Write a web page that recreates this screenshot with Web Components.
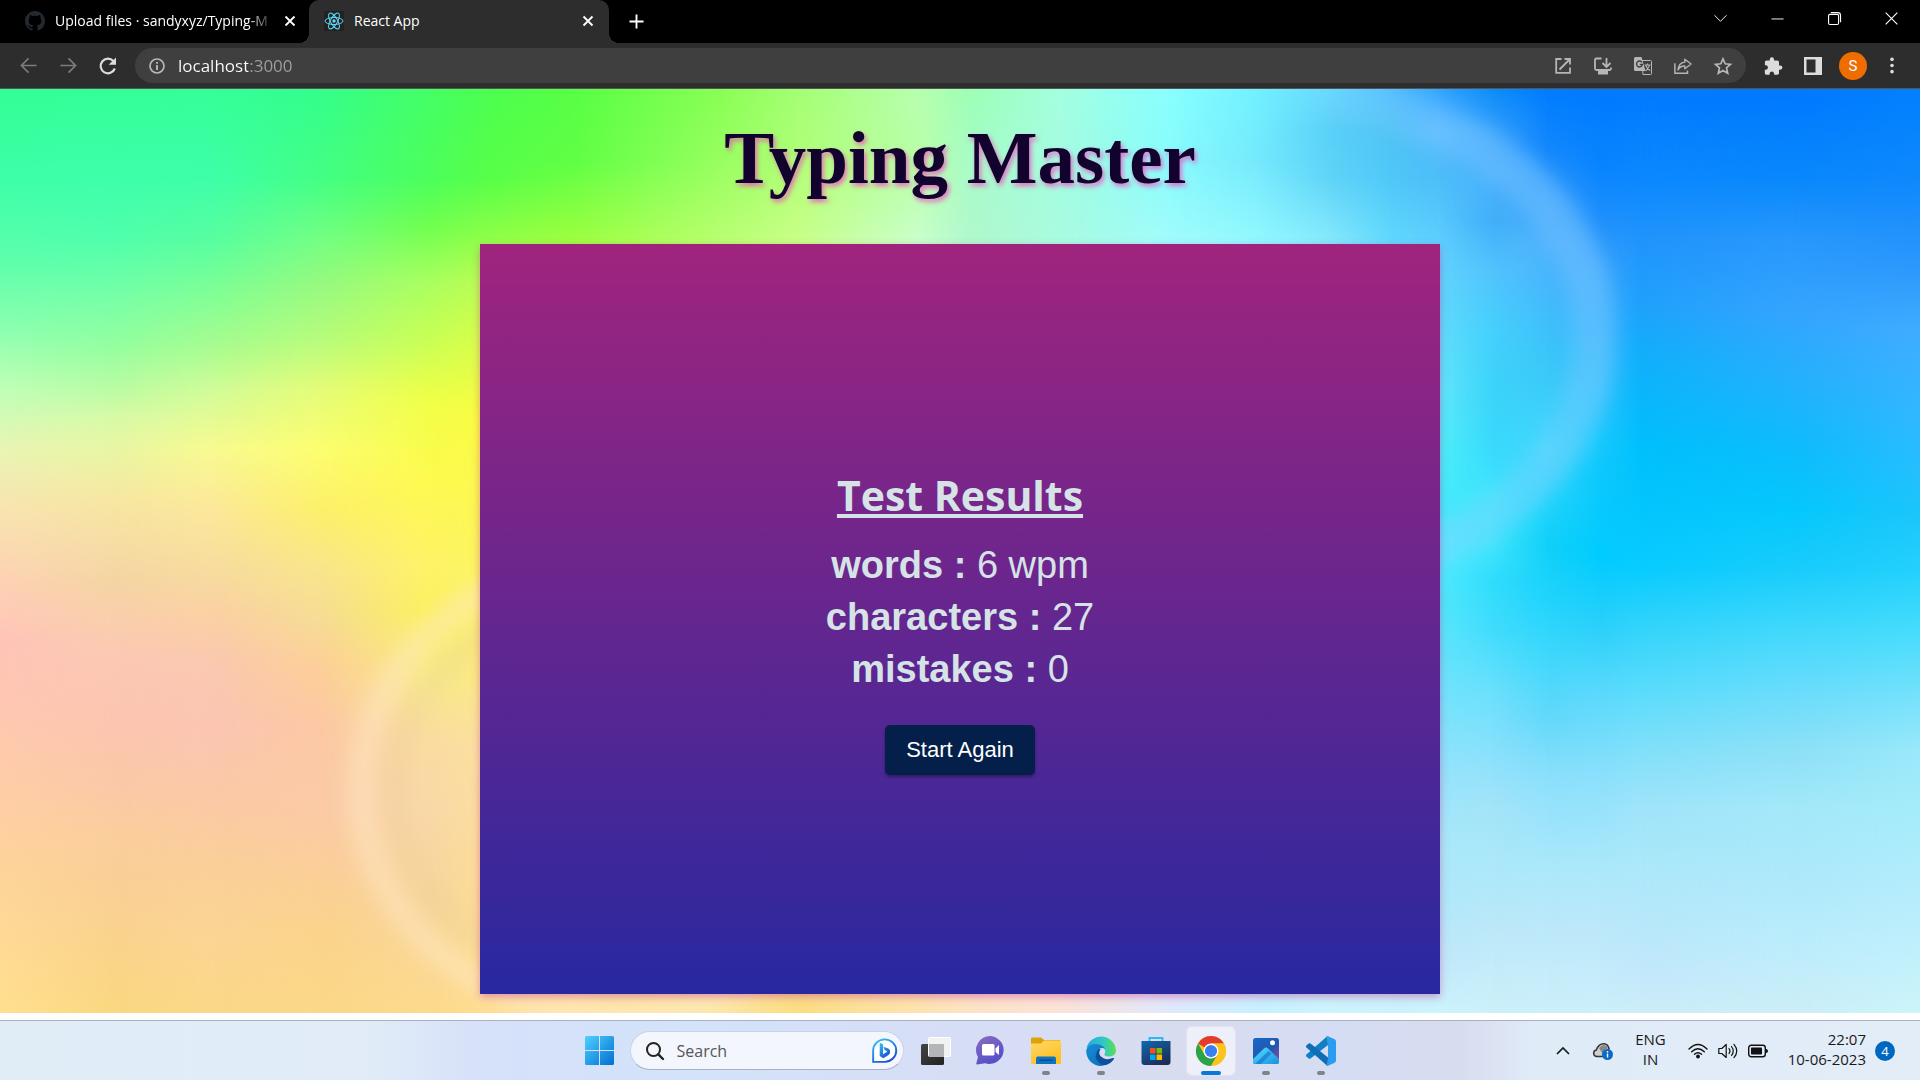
<!DOCTYPE html>
<html lang="en">
<head>
<meta charset="utf-8">
<title>React App</title>
<style>
html, body { margin: 0; height: 100%; }
body { font-family: "Open Sans", "Noto Sans", sans-serif; background: #fff; overflow: hidden; }
</style>
</head>
<body>
<desktop-shell>
  <tab-strip slot="top"></tab-strip>
  <address-bar slot="top"></address-bar>
  <typing-app>
    <span slot="title">Typing Master</span>
    <results-card>
      <span slot="heading">Test Results</span>
      <result-row label="words">6 wpm</result-row>
      <result-row label="characters">27</result-row>
      <result-row label="mistakes">0</result-row>
      <span slot="action">Start Again</span>
    </results-card>
  </typing-app>
  <task-bar slot="bottom"></task-bar>
</desktop-shell>

<script>
const ICONS = {
  github: ['0 0 16 16', '<path fill="#24292f" d="M8 0C3.58 0 0 3.58 0 8c0 3.54 2.29 6.53 5.47 7.59.4.07.55-.17.55-.38 0-.19-.01-.82-.01-1.49-2.01.37-2.53-.49-2.69-.94-.09-.23-.48-.94-.82-1.13-.28-.15-.68-.52-.01-.53.63-.01 1.08.58 1.23.82.72 1.21 1.87.87 2.33.66.07-.52.28-.87.51-1.07-1.78-.2-3.64-.89-3.64-3.95 0-.87.31-1.59.82-2.15-.08-.2-.36-1.02.08-2.12 0 0 .67-.21 2.2.82.64-.18 1.32-.27 2-.27s1.36.09 2 .27c1.53-1.04 2.2-.82 2.2-.82.44 1.1.16 1.92.08 2.12.51.56.82 1.27.82 2.15 0 3.07-1.87 3.75-3.65 3.95.29.25.54.73.54 1.48 0 1.07-.01 1.93-.01 2.2 0 .21.15.46.55.38A8.01 8.01 0 0 0 16 8c0-4.42-3.58-8-8-8z"/>'],
  react: ['0 0 20 20', '<rect width="20" height="20" rx="1" fill="#222"/><g fill="none" stroke="#61dafb"><ellipse cx="10" cy="10" rx="9" ry="3.5"/><ellipse cx="10" cy="10" rx="9" ry="3.5" transform="rotate(60 10 10)"/><ellipse cx="10" cy="10" rx="9" ry="3.5" transform="rotate(120 10 10)"/></g><circle cx="10" cy="10" r="1.7" fill="#61dafb"/>'],
  close: ['0 0 12 12', '<path d="M1.5 1.5l9 9M10.5 1.5l-9 9" stroke="currentColor" stroke-width="1.800"/>'],
  plus: ['0 0 16 16', '<path d="M8 0.5v15M.5 8h15" stroke="currentColor" stroke-width="2"/>'],
  down: ['0 0 14 14', '<path d="M.5 3.5L7 10l6.500-6.500" fill="none" stroke="currentColor" stroke-width="1"/>'],
  minimize: ['0 0 14 14', '<path d="M.5 7.500h13" stroke="currentColor"/>'],
  restore: ['0 0 14 14', '<rect x=".6" y="2.600" width="10.800" height="10.800" rx="1.500" fill="none" stroke="currentColor" stroke-width="1.200"/><path d="M3 .7h7.500a3 3 0 0 1 3 3V11" fill="none" stroke="currentColor" stroke-width="1.200"/>'],
  winclose: ['0 0 14 14', '<path d="M.7.7l12.600 12.600M13.300.7L.7 13.300" stroke="currentColor" stroke-width="1.200"/>'],
  back: ['0 0 18 18', '<path d="M17.500 9H2M9 1.500L1.500 9 9 16.500" fill="none" stroke="currentColor" stroke-width="1.700"/>'],
  forward: ['0 0 18 18', '<path d="M.5 9H16M9 1.500L16.500 9 9 16.500" fill="none" stroke="currentColor" stroke-width="1.700"/>'],
  reload: ['0 0 18 18', '<path d="M15.800 11.500A7.300 7.300 0 1 1 14.300 4" fill="none" stroke="currentColor" stroke-width="2.200"/><path d="M17 .5v7.300H9.700z" fill="currentColor"/>'],
  info: ['0 0 16 16', '<circle cx="8" cy="8" r="7" fill="none" stroke="currentColor" stroke-width="1.700"/><path d="M8 7v5M8 4v1.800" stroke="currentColor" stroke-width="1.900"/>'],
  open: ['0 0 16 16', '<path d="M6.500 1H1.200v13.800H15V9.500M9.500 1H15v5.500M15 1L4.500 11.500" fill="none" stroke="currentColor" stroke-width="1.800"/>'],
  install: ['0 0 18 18', '<path d="M7.500 1.500H2.400Q1 1.500 1 3v8.500q0 1.500 1.400 1.500h13.200q1.400 0 1.400-1.500V10.500M12.500 1v8.500M8.500 6l4 4 4-4" fill="none" stroke="currentColor" stroke-width="1.800"/><path d="M4 14h10v3.500H4z" fill="currentColor"/>'],
  translate: ['0 0 18 18', '<path d="M8 3.500h8.500q1 0 1 1v12q0 1-1 1H9z" fill="none" stroke="currentColor" stroke-width="1"/><path d="M10.500 8h6M13.500 6.500V8M15.500 8q-.8 3.500-4 6M11.800 8.500q1 3 4.400 5" fill="none" stroke="currentColor" stroke-width="1.100"/><path d="M1.500 0h6l4 14H1.500Q0 14 0 12.500v-11Q0 0 1.500 0z" fill="currentColor"/><path d="M8 5.300a3 3 0 1 0 .5 2.200H5.800" fill="none" stroke="#3f3f3f" stroke-width="1.400"/>'],
  share: ['0 0 20 18', '<path d="M1 6v11h14v-3" fill="none" stroke="currentColor" stroke-width="1.600"/><path d="M12 1.500l7 5.300-7 5.300V9Q7 8.500 4.500 13.500 5 5.500 12 4.700z" fill="none" stroke="currentColor" stroke-width="1.500" stroke-linejoin="round"/>'],
  star: ['0 0 18 18', '<path d="M9 1.800l2.200 5 5.300.5-4 3.600 1.200 5.300L9 13.400l-4.700 2.800 1.200-5.300-4-3.600 5.300-.5z" fill="none" stroke="currentColor" stroke-width="1.700"/>'],
  puzzle: ['0 0 18 18', '<path fill="currentColor" d="M16.300 8.500h-1.300V5.200c0-.9-.7-1.700-1.700-1.700H10V2.300a2.100 2.100 0 0 0-4.200 0v1.200H2.500C1.600 3.500.9 4.300.9 5.200v3.100h1.200a2.300 2.300 0 0 1 0 4.500H.8V16c0 .9.800 1.700 1.700 1.700h3.100v-1.300a2.300 2.300 0 0 1 4.500 0v1.300h3.200c1 0 1.700-.8 1.700-1.700v-3.300h1.300a2.100 2.100 0 0 0 0-4.200z"/>'],
  panel: ['0 0 18 18', '<path fill="currentColor" fill-rule="evenodd" d="M0 0h18v18H0zM2.500 2.500v13H11.500v-13z"/>'],
  dots: ['0 0 4 18', '<g fill="currentColor"><circle cx="2" cy="2.500" r="1.900"/><circle cx="2" cy="9" r="1.900"/><circle cx="2" cy="15.500" r="1.900"/></g>'],
  windows: ['0 0 29 29', '<defs><linearGradient id="w" x2="1" y2="1"><stop stop-color="#50d0ff"/><stop offset="1" stop-color="#006fd0"/></linearGradient></defs><path fill="url(#w)" d="M1.500 0H14v14H0V1.500Q0 0 1.500 0zM15 0h12.500Q29 0 29 1.500V14H15zM0 15h14v14H1.500Q0 29 0 27.500zM15 15h14v12.500q0 1.500-1.500 1.500H15z"/>'],
  search: ['0 0 18 18', '<circle cx="7.500" cy="7.500" r="6.500" fill="none" stroke="#222" stroke-width="2"/><path d="M12.300 12.300l4.700 4.700" stroke="#222" stroke-width="2.400" stroke-linecap="round"/>'],
  bing: ['0 0 26 26', '<defs><linearGradient id="b" x2=".6" y2="1"><stop stop-color="#30c8f8"/><stop offset="1" stop-color="#1c50d0"/></linearGradient></defs><path d="M1.200 24.800V13a12 11.700 0 1 1 12 11.800z" fill="#fff" stroke="url(#b)" stroke-width="2"/><path d="M8 5l3.500 1.500v10.300l4.500-2.800-2.800-1.500-1.300-3.500 5 1.800q2 1 2 3.500t-2.500 4l-4.700 2.700L8 18.800z" fill="url(#b)"/>'],
  taskview: ['0 0 30 28', '<defs><linearGradient id="t" y2="1"><stop stop-color="#444"/><stop offset="1" stop-color="#222"/></linearGradient></defs><rect y="7" width="23" height="21" rx="1.500" fill="url(#t)"/><rect x="7.500" y=".5" width="22" height="19" rx="1" fill="#f2f2f2" stroke="#fff"/><path d="M8 7h14q1 0 1 1v12H8z" fill="#b4b5b8"/>'],
  chat: ['0 0 29 29', '<defs><linearGradient id="c" x2=".5" y2="1"><stop stop-color="#8a6cc0"/><stop offset="1" stop-color="#5450c8"/></linearGradient></defs><path fill="url(#c)" d="M14.500 0A14.300 14 0 1 1 9 27.300L1.200 28.500Q0 28.500.3 27.300L2 21A14.300 14 0 0 1 14.500 0z"/><rect x="6" y="8" width="12.500" height="11.500" rx="1.500" fill="#fff"/><path d="M19.500 12.500L23 9v10l-3.500-3z" fill="#fff"/>'],
  folder: ['0 0 30 27', '<defs><linearGradient id="f" x2=".5" y2="1"><stop stop-color="#ffd968"/><stop offset="1" stop-color="#ffc022"/></linearGradient></defs><path fill="#e0a008" d="M1 0h9l3 2.500H29V9H0V1Q0 0 1 0z"/><path fill="url(#f)" d="M0 6h10l3-3h16q1 0 1 1v21.500q0 1-1 1H1q-1 0-1-1z"/><path fill="#0f74c0" d="M5 26.500V21q0-2 2-2h16q2 0 2 2v5.500z"/><path d="M9 22.800h12" stroke="#0a4f92" stroke-width="1.500" stroke-linecap="round"/>'],
  edge: ['0 0 30 30', '<defs><linearGradient id="e1" x2="1"><stop stop-color="#28a8e0"/><stop offset=".6" stop-color="#34c8c0"/><stop offset="1" stop-color="#5ce050"/></linearGradient><linearGradient id="e2" y2="1"><stop stop-color="#1490d8"/><stop offset="1" stop-color="#0c68b8"/></linearGradient></defs><path fill="url(#e1)" d="M.5 12A15 15 0 0 1 30 14q0 6.500-7 6.500-5 0-4.500-2.500 2-3-1-6Q10 6 .5 12z"/><path fill="url(#e2)" d="M.2 14Q2 8 9 8q7 0 10 4.500-5-1.500-7 2-2 6 3 10 4 3 8 2.500-4 3-8 3A15 15 0 0 1 .2 14z"/><path fill="#0d4f9c" d="M12.500 13Q7 20 12 25.500q3 4 8 3.500 5-1.500 8-6 .5-1.500-1-1-8 3-12.500-2Q12 17 14.500 13z"/>'],
  store: ['0 0 30 30', '<defs><linearGradient id="s" x2=".6" y2="1"><stop stop-color="#1068b0"/><stop offset="1" stop-color="#1c2f58"/></linearGradient></defs><path d="M8.500 6V2h13v4" fill="none" stroke="#2cb8f0" stroke-width="1.800"/><path fill="url(#s)" d="M.5 5h29v21q0 3-3 3h-23q-3 0-3-3z"/><path fill="#f25022" d="M9 12h5.500v5.500H9z"/><path fill="#7fba00" d="M15.500 12H21v5.500h-5.500z"/><path fill="#00a4ef" d="M9 18.500h5.500V24H9z"/><path fill="#ffb900" d="M15.500 18.500H21V24h-5.500z"/>'],
  chrome: ['0 0 48 48', '<circle cx="24" cy="24" r="24" fill="#fcc31e"/><path fill="#e33b2e" d="M24 24L3.200 12A24 24 0 0 1 44.800 12H24z"/><path fill="#2ba24c" d="M24 48A24 24 0 0 1 3.200 12L13.600 30 24 36l10.400-6z"/><path fill="#fcc31e" d="M24 48l10.400-18L24 12h20.800A24 24 0 0 1 24 48z"/><circle cx="24" cy="24" r="12" fill="#fff"/><circle cx="24" cy="24" r="9.800" fill="#3a7ff0"/>'],
  photos: ['0 0 26 26', '<defs><linearGradient id="p" x2=".7" y2="1"><stop stop-color="#1868c8"/><stop offset=".6" stop-color="#2058b0"/><stop offset="1" stop-color="#8848a8"/></linearGradient><linearGradient id="p2" y2="1"><stop stop-color="#50e0ff"/><stop offset="1" stop-color="#1a90e0"/></linearGradient></defs><rect width="26" height="26" rx="2.500" fill="url(#p)"/><path fill="url(#p2)" d="M0 21L11 10.500q2-1.800 4 0L26 21v2.500Q26 26 23.500 26h-21Q0 26 0 23.500z"/><path d="M2 26L15.500 13l3 2.500L8 26z" fill="#1878d0" opacity=".7"/><circle cx="19.500" cy="4.800" r="2.500" fill="#fff"/>'],
  vscode: ['0 0 30 30', '<path d="M21.500 0L22 9 4.500 22.500q-1 .6-1.800 0L.4 20.400q-.8-.9 0-1.800z" fill="#0f80c8"/><path d="M21.500 30L22 21.500 4.500 7.500q-1-.6-1.800 0L.4 9.600q-.8.900 0 1.800z" fill="#0e6eb8"/><path d="M21.500 0l7.200 3.300Q30 4 30 5.500v19q0 1.500-1.300 2.200L21.500 30q-1 .2-1.500-.5 2 .2 2-2v-25q0-2.200-2-2 .5-.7 1.500-.5z" fill="#2a9df0"/>'],
  up: ['0 0 14 14', '<path d="M1 10l6-6 6 6" fill="none" stroke="#1a1a1a" stroke-width="1.700"/>'],
  cloud: ['0 0 20 18', '<path d="M3.500 14.500A3.300 3.300 0 0 1 3.300 8Q5.500 1.500 11 1.700q4 .3 5 4.800l-1 3q-2 1-3 5z" fill="#cfcfcf" stroke="#333" stroke-width="1.500"/><path d="M6 6q5-6 9 0l-6 5z" fill="#888"/><circle cx="14.500" cy="12.500" r="5.500" fill="#0b6ac4"/><path d="M14.500 11.500v4M14.500 9v1.400" stroke="#fff" stroke-width="1.400"/>'],
  wifi: ['0 0 20 15', '<g fill="none" stroke="#111" stroke-width="1.400" stroke-linecap="round"><path d="M1 5.500q9-9 18 0M3.700 8.200q6.300-6 12.600 0M6.500 10.800q3.500-3.200 7 0"/></g><circle cx="10" cy="13" r="1.900" fill="#111"/>'],
  sound: ['0 0 20 16', '<g fill="none" stroke="#111" stroke-width="1.200" stroke-linecap="round" stroke-linejoin="round"><path d="M.8 5.500h3L8.200 1.500v13L3.800 10.500h-3zM11 5.500q2 2.500 0 5M13.500 3.500q3.500 4.500 0 9M16 1.300q5.500 6.700 0 13.400"/></g>'],
  battery: ['0 0 20 13', '<rect x=".7" y=".7" width="16.600" height="11.600" rx="2.500" fill="none" stroke="#111" stroke-width="1.400"/><rect x="3" y="3" width="11" height="7" rx=".8" fill="#111"/><path d="M18 4.500q2 0 2 2t-2 2z" fill="#111"/>']
};

function define(name, html, setup) {
  const template = document.createElement('template');
  template.innerHTML = html;
  customElements.define(name, class extends HTMLElement {
    constructor() {
      super();
      this.attachShadow({ mode: 'open' }).append(template.content.cloneNode(true));
    }
    connectedCallback() { if (setup) setup(this, this.shadowRoot); }
  });
}

define('ui-icon', `
<style>
:host { display: block; flex: none; width: var(--w, 18px); height: var(--h, var(--w, 18px)); }
svg { display: block; width: 100%; height: 100%; overflow: visible; }
</style>
<svg aria-hidden="true"></svg>`, (el, root) => {
  const [box, shapes] = ICONS[el.getAttribute('name')];
  const svg = root.querySelector('svg');
  svg.setAttribute('viewBox', box);
  svg.innerHTML = shapes;
});

define('desktop-shell', `
<style>
:host { display: flex; flex-direction: column; height: 100vh; }
main { flex: 1; min-height: 0; display: flex; padding-bottom: 7px; background: #fff; }
</style>
<slot name="top"></slot>
<main><slot></slot></main>
<slot name="bottom"></slot>`);

define('tab-strip', `
<style>
:host { display: flex; height: 43px; background: #000; color: #fff; font-size: 14px; line-height: 20px; }
button { all: unset; display: flex; align-items: center; justify-content: center; flex: none; }
.tab { box-sizing: border-box; width: 300px; display: flex; align-items: center; padding: 0 15px 2px; gap: 10px; position: relative; }
.first { width: 309px; padding: 0 13px 2px 25px; }
.title { flex: 1; min-width: 0; white-space: nowrap; }
.first .title { -webkit-mask: linear-gradient(to right, #000 88%, transparent); mask: linear-gradient(to right, #000 88%, transparent); }
.active { background: #2d2d2d; border-radius: 10px 10px 0 0; }
.active::before, .active::after { content: ""; position: absolute; bottom: 0; width: 10px; height: 10px; }
.active::before { right: 100%; background: radial-gradient(circle at 0 0, transparent 10px, #2d2d2d 10px); }
.active::after { left: 100%; background: radial-gradient(circle at 100% 0, transparent 10px, #2d2d2d 10px); }
.new { width: 54px; --w: 15px; }
.close { --w: 12px; }
.fav { --w: 20px; }
.controls { margin: 0 0 0 auto; display: flex; height: 37px; --w: 13px; }
.controls button { width: 57px; }
</style>
<div class="tab first"><ui-icon class="fav" name="github"></ui-icon><span class="title">Upload files · sandyxyz/Typing-M</span><button class="close" aria-label="Close tab"><ui-icon name="close"></ui-icon></button></div>
<div class="tab active"><ui-icon class="fav" name="react"></ui-icon><span class="title">React App</span><button class="close" aria-label="Close tab"><ui-icon name="close"></ui-icon></button></div>
<button class="new" aria-label="New tab"><ui-icon name="plus"></ui-icon></button>
<div class="controls">
<button aria-label="Search tabs"><ui-icon name="down"></ui-icon></button>
<button aria-label="Minimize"><ui-icon name="minimize"></ui-icon></button>
<button aria-label="Restore"><ui-icon name="restore"></ui-icon></button>
<button aria-label="Close window"><ui-icon name="winclose"></ui-icon></button>
</div>`);

define('address-bar', `
<style>
:host { display: flex; align-items: center; box-sizing: border-box; height: 46px; padding: 0 10px 0 8px; background: #2d2d2d; border-bottom: 1px solid #555; color: #dcdcdc; }
button { all: unset; display: flex; align-items: center; justify-content: center; width: 40px; height: 35px; }
.dim { color: #7d7d7d; --w: 17px; }
.box { flex: 1; min-width: 0; display: flex; align-items: center; height: 35px; margin: 0 7px; padding: 0 3px 0 14px; border-radius: 18px; background: #3f3f3f; color: #b6b6b6; --w: 16px; }
input { all: unset; flex: 1; min-width: 0; margin-left: 13px; font-size: 17px; line-height: 24px; color: #fff; -webkit-text-fill-color: transparent; background: linear-gradient(to right, #fff 70px, #a0a0a0 70px); -webkit-background-clip: text; background-clip: text; }
.box .wide { --w: 18px; }
.avatar { width: 28px; height: 28px; margin: 0 7px 0 6px; border-radius: 50%; background: #ee6c00; color: #fff; font: 15px/28px Roboto, sans-serif; }
.menu { width: 36px; --w: 4px; --h: 17px; }
</style>
<button class="dim" aria-label="Back"><ui-icon name="back"></ui-icon></button>
<button class="dim" aria-label="Forward"><ui-icon name="forward"></ui-icon></button>
<button aria-label="Reload"><ui-icon name="reload"></ui-icon></button>
<div class="box">
<ui-icon name="info"></ui-icon>
<input aria-label="Address" value="localhost:3000" spellcheck="false">
<button aria-label="Open in new window"><ui-icon name="open"></ui-icon></button>
<button class="wide" aria-label="Install"><ui-icon name="install"></ui-icon></button>
<button class="wide" aria-label="Translate"><ui-icon name="translate"></ui-icon></button>
<button class="wide" aria-label="Share"><ui-icon name="share"></ui-icon></button>
<button class="wide" aria-label="Bookmark"><ui-icon name="star"></ui-icon></button>
</div>
<button aria-label="Extensions"><ui-icon name="puzzle"></ui-icon></button>
<button aria-label="Side panel"><ui-icon name="panel"></ui-icon></button>
<button class="avatar" aria-label="Profile">S</button>
<button class="menu" aria-label="Menu"><ui-icon name="dots"></ui-icon></button>`);

// Colour mesh: each column is a vertical gradient that fades into the next one.
// Column x is out of 1920, stop y is out of 1540.
const MESH = [
 [0, '0 32ff96 150 3effa8 290 5effac 400 8cffb0 500 bfffb8 600 eaf5b4 700 f8e4b0 800 fdd5b4 920 ffc4b8 1050 fec8b0 1200 ffcfa4 1300 fed49a 1540 ffe090'],
 [110, '0 33ff98 150 3effaa 250 50ffac 350 78ffa8 430 94ffa0 500 bafca4 550 d8faa8 600 e8f6a4 680 f6e8a2 750 f6dea4 820 f5d4a4 880 f9cfac 950 fcc8b4 1050 fcc5b0 1150 fbc8a8 1250 fbce9c 1350 fad094 1540 fad880'],
 [213, '0 34ff98 150 3effa8 250 58fea0 350 84ff94 430 a8fc90 500 d0fc98 600 f8fa90 700 fce89a 800 f7dc9e 880 fbd0a4 960 fac8b0 1060 fbc5b2 1200 fbcaa4 1300 fad098 1400 fbd494 1540 fad888'],
 [320, '0 34fe8c 150 44ff84 250 74ff84 320 94fa80 420 b8fc7c 500 e4fc78 600 fcfe70 700 fcf06a 800 f9e58c 880 f6dc94 960 fdcf98 1060 fcc8a4 1200 fbcaa6 1400 fbd38c 1540 fbd888'],
 [427, '0 44ff66 150 4cff5c 230 70ff50 320 a8ff60 430 ccff54 520 f0ff48 650 fefa50 800 fef268 870 fbf060 980 f8ea88 1080 fadca0 1200 f9d8a8 1350 f8d49c 1540 fcda8c'],
 [490, '0 4cff50 150 58ff48 250 90ff48 320 bcfc50 430 dcff48 550 fbfc40 800 fbf560 1100 fbe0a0 1540 fedc90'],
 [575, '0 58ff44 120 60ff44 250 9cff40 900 fbf560 1540 ffe4a4'],
 [720, '0 88ff54 120 98ff60 250 b8ff70 900 fbf060 1540 fbe5a0'],
 [800, '0 a4ff74 120 b0ff78 250 c8ff88 900 fbf060 1540 fbdd84'],
 [920, '0 b8ffb0 120 b8ffa8 250 c8ffcc 900 f0f0a0 1540 fde2b0'],
 [970, '0 9cffb4 120 a8fcc8 250 b0f8cc 900 e0f0c0 1540 fde2c4'],
 [1060, '0 a4ffe0 120 a4fce0 250 a8fce0 900 e0f0e0 1540 fbe2d8'],
 [1170, '0 88ffff 120 88fcfc 250 a0fcfc 900 c0f0ff 1540 e0e8fc'],
 [1260, '0 70f0ff 120 74e8fc 250 90f8ff 900 a0f0ff 1540 c8f0ff'],
 [1330, '0 68d8ff 70 58d0f8 150 60d4f8 250 84e8fc 900 80f0ff 1540 ccf4fc'],
 [1390, '0 54c0ff 70 4cc4f4 150 50c8f8 250 60d8fc 900 60e8ff 1540 ccf2fc'],
 [1440, '0 34a4ff 70 50b8ff 150 4cbcf8 270 60d0ff 400 60dcfc 500 60e8fc 600 4cf0f8 700 40ecfc 780 50eaff 860 50e8fc 950 64e4fc 1050 7ce4fc 1150 98e4fc 1250 a8e8fa 1350 b0e8fa 1450 c0e8fa 1540 ccf4fc'],
 [1493, '0 0c8cf8 70 34a0fc 150 44acfc 220 3ca8f8 300 50c0fc 400 40d0fc 500 34d4f8 600 30dcfc 680 38e8fc 760 40e4fc 820 30dcfc 900 40dcfc 1000 68e0fc 1100 88e0fc 1200 a4e4f8 1300 ace8fa 1400 bce8f8 1540 ccf0fa'],
 [1547, '0 007cff 100 1488fc 180 349cfc 260 48acfc 320 40b0fc 450 30c4f8 600 38d8fc 680 24d4fc 760 10d0f8 850 20d4fc 950 40d8fc 1050 64d8fa 1150 8ce0fc 1300 ace8fa 1400 bce8fa 1540 ccf0fa'],
 [1600, '0 007aff 130 0884ff 220 2090fc 300 38a4fc 400 30b0fc 500 2cc0fc 580 18c8fc 650 0cc8fc 780 00ccff 900 2cd0fa 1000 58d8fc 1150 8ce0fc 1300 ace8fa 1400 bce8fa 1540 ccf0fa'],
 [1640, '0 007aff 150 0c88ff 250 2094fc 350 20a0fc 450 10b0fc 600 00c0fc 800 08ccff 900 34d4fa 1000 58dcfc 1100 80e0fa 1200 a0e4fa 1300 ace8fa 1400 b8e8fa 1480 c4e8fc 1540 cceef6'],
 [1790, '0 0078ff 150 0888fc 250 2898fc 370 34a4ff 480 24b0fc 600 0cbcfc 700 04c8fc 800 18ccfc 900 40d8fc 1000 68dcfc 1100 8ce0f6 1200 a4e8fa 1300 ace8fa 1400 b8ecfc 1540 cceef8'],
 [1920, '0 0080ff 150 1088fc 300 2c98fc 400 40acff 550 30b8ff 700 1cc4fc 800 24d0fc 900 44dcfc 1000 70e0fc 1100 98e8fa 1200 a4ecfa 1300 b0ecfc 1400 bceefc 1540 ccf4fa']
];

define('colour-wash', `
<style>
:host { display: grid; overflow: hidden; isolation: isolate; }
div, svg { grid-area: 1 / 1; width: 100%; height: 100%; min-height: 0; }
svg { z-index: 1; }
</style>`, (el, root) => {
  MESH.forEach(([x, list], i) => {
    const parts = list.split(' ');
    const stops = [];
    for (let k = 0; k < parts.length; k += 2) stops.push('#' + parts[k + 1] + ' ' + parts[k] / 15.4 + '%');
    const layer = document.createElement('div');
    layer.style.background = 'linear-gradient(' + stops + ')';
    if (i) {
      const fade = 'linear-gradient(to right, transparent ' + MESH[i - 1][0] / 19.2 + '%, #000 ' + x / 19.2 + '%)';
      layer.style.webkitMaskImage = fade;
      layer.style.maskImage = fade;
    }
    root.append(layer);
  });
  root.append(Object.assign(document.createElement('template'), { innerHTML: `
    <svg viewBox="0 0 1920 924" preserveAspectRatio="none" aria-hidden="true">
      <defs>
        <filter id="soft"><feGaussianBlur stdDeviation="9"/></filter>
        <linearGradient id="ring" gradientUnits="userSpaceOnUse" x1="1300" y1="0" x2="1440" y2="0">
          <stop stop-color="#a0d0ff" stop-opacity="0"/><stop offset="1" stop-color="#a0d0ff" stop-opacity=".27"/>
        </linearGradient>
        <linearGradient id="disc" gradientUnits="userSpaceOnUse" x1="1400" y1="0" x2="1520" y2="0">
          <stop stop-color="#60d0ff" stop-opacity="0"/><stop offset="1" stop-color="#60d0ff" stop-opacity=".2"/>
        </linearGradient>
      </defs>
      <g fill="none" filter="url(#soft)">
        <ellipse cx="1335" cy="246" rx="280" ry="246" fill="url(#disc)"/>
        <ellipse cx="1335" cy="246" rx="260" ry="226" stroke="url(#ring)" stroke-width="42"/>
        <ellipse cx="615" cy="700" rx="254" ry="228" stroke="#ffe8c8" stroke-opacity=".45" stroke-width="26"/>
        <ellipse cx="615" cy="700" rx="218" ry="192" stroke="#e8d098" stroke-opacity=".3" stroke-width="20"/>
      </g>
    </svg>` }).content);
});

define('typing-app', `
<style>
:host { flex: 1; min-width: 0; display: grid; }
colour-wash, section { grid-area: 1 / 1; min-height: 0; }
section { position: relative; display: flex; flex-direction: column; align-items: center; padding-bottom: 19px; }
h1 { margin: 0; padding: 27px 0 44px; font: bold 75px/84px "Liberation Serif", serif; color: #12022e; text-shadow: 2px 3px 5px rgba(250, 60, 195, .75); }
</style>
<colour-wash></colour-wash>
<section><h1><slot name="title"></slot></h1><slot></slot></section>`);

define('results-card', `
<style>
:host { flex: 1; width: 50%; display: flex; flex-direction: column; align-items: center; justify-content: center; background: linear-gradient(#a0247e, #2828a0); box-shadow: 0 3px 8px rgba(190, 50, 150, .45); color: #d5e3e6; }
h2 { margin: 0; font: bold 41px/64px "Open Sans", "Noto Sans", sans-serif; text-decoration: underline; text-decoration-thickness: 4px; text-underline-offset: 3px; text-decoration-skip-ink: none; }
.rows { margin: 12px 0 30px; }
button { box-sizing: border-box; height: 50px; padding: 0 21px; border: 0; border-radius: 5px; background: #04204a; color: #fff; font: 22px/26px "Liberation Sans", sans-serif; box-shadow: 0 2px 3px rgba(0, 0, 0, .35); }
</style>
<h2><slot name="heading"></slot></h2>
<div class="rows"><slot></slot></div>
<button><slot name="action"></slot></button>`);

define('result-row', `
<style>
:host { display: block; text-align: center; font: 38px/52px "Liberation Sans", sans-serif; }
</style>
<b></b> <slot></slot>`, (el, root) => {
  root.querySelector('b').textContent = el.getAttribute('label') + ' :';
});

define('task-bar', `
<style>
:host { display: grid; grid-template-columns: 1fr auto 1fr; align-items: center; box-sizing: border-box; height: 60px; border-top: 1px solid #a9b1bf; background: linear-gradient(to right, #e0edf7 0, #e1ecf8 19%, #d6e1fa 25%, #d3e3f9 36%, #d6def6 50%, #d8dcef 62%, #d5ddf4 70%, #d8dcef 76%, #e0ebf8 80%, #e2edf8 100%); color: #1a1a1a; font-size: 15px; line-height: 20px; }
button { all: unset; position: relative; display: flex; align-items: center; justify-content: center; }
nav { grid-column: 2; display: flex; align-items: center; padding-left: 3px; }
nav button { width: 48px; height: 48px; margin: 0 3px 0 4px; --w: 30px; }
.start { --w: 29px; margin: 0 6px 0 0; }
.open::after { content: ""; position: absolute; bottom: 0; width: 8px; height: 4px; border-radius: 2px; background: #80838a; }
.current { background: #edf0f9; border-radius: 5px; box-shadow: 0 0 1px 1px #dfe3ee; }
.current::after { width: 20px; background: #0a78d4; }
.box { display: flex; align-items: center; gap: 13px; box-sizing: border-box; width: 274px; height: 39px; margin-right: 4px; padding: 0 6px 0 15px; border-radius: 20px; background: #f3f6fd; border: 1px solid #c9d2e8; border-bottom-color: #a9b1c6; --w: 18px; }
input { all: unset; flex: 1; min-width: 0; font-size: 16px; line-height: 22px; color: #555; }
input::placeholder { color: #555; opacity: 1; }
.tray { grid-column: 3; justify-self: end; display: flex; align-items: center; padding-right: 25px; }
.centre, .right { padding-bottom: 3px; white-space: pre-line; }
.centre { text-align: center; }
.right { text-align: right; }
.quick { gap: 10px; margin: 0 20px 0 22px; --w: 20px; }
.badge { width: 20px; height: 20px; margin-left: 9px; border-radius: 50%; background: #0067c0; color: #fff; font-size: 13px; }
</style>
<nav>
<button class="start" aria-label="Start"><ui-icon name="windows"></ui-icon></button>
<div class="box"><ui-icon name="search"></ui-icon><input aria-label="Search" placeholder="Search"><ui-icon name="bing" style="--w:25px"></ui-icon></div>
<button aria-label="Task view"><ui-icon name="taskview"></ui-icon></button>
<button aria-label="Chat" style="--w:29px"><ui-icon name="chat"></ui-icon></button>
<button class="open" aria-label="File Explorer"><ui-icon name="folder"></ui-icon></button>
<button class="open" aria-label="Edge"><ui-icon name="edge"></ui-icon></button>
<button aria-label="Store"><ui-icon name="store"></ui-icon></button>
<button class="open current" aria-label="Chrome"><ui-icon name="chrome"></ui-icon></button>
<button class="open" aria-label="Photos" style="--w:26px"><ui-icon name="photos"></ui-icon></button>
<button class="open" aria-label="Visual Studio Code"><ui-icon name="vscode"></ui-icon></button>
</nav>
<div class="tray">
<button aria-label="Hidden icons" style="--w:14px"><ui-icon name="up"></ui-icon></button>
<button aria-label="OneDrive" style="--w:20px;margin:0 22px 0 23px"><ui-icon name="cloud"></ui-icon></button>
<button class="centre">ENG
IN</button>
<button class="quick" aria-label="Network, volume, battery"><ui-icon name="wifi"></ui-icon><ui-icon name="sound"></ui-icon><ui-icon name="battery"></ui-icon></button>
<button class="right">22:07
10-06-2023</button>
<button class="badge">4</button>
</div>`);
</script>
</body>
</html>
